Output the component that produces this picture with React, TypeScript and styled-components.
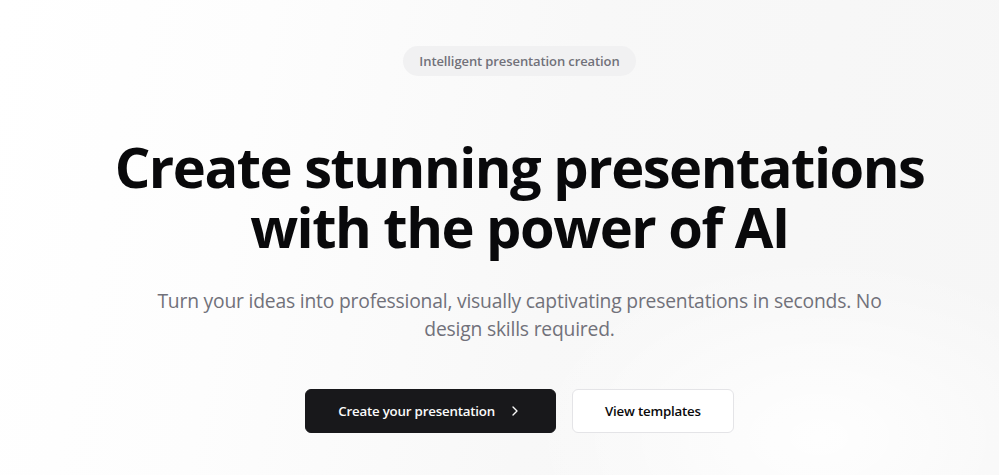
import React from "react";
import styled, { createGlobalStyle } from "styled-components";
import { ChevronRight } from "lucide-react";

const GlobalStyle = createGlobalStyle`
  html, body {
    margin: 0;
    padding: 0;
  }
  body {
    font-family: "Open Sans", "Noto Sans", Arial, sans-serif;
    background: #ffffff;
    -webkit-font-smoothing: antialiased;
  }
  * { box-sizing: border-box; }
`;

const Page = styled.main`
  min-height: 475px;
  width: 100%;
  overflow: hidden;
  background:
    radial-gradient(ellipse 420px 260px at 82% 92%, rgba(255,255,255,0.9), rgba(255,255,255,0) 70%),
    linear-gradient(100deg, #ffffff 0%, #fdfdfd 25%, #f8f8f8 55%, #f6f6f6 100%);
`;

const Hero = styled.section`
  display: flex;
  flex-direction: column;
  align-items: center;
  text-align: center;
  padding: 46px 0 40px 40px;
`;

const Badge = styled.div`
  display: inline-flex;
  align-items: center;
  height: 30px;
  padding: 0 16px;
  border-radius: 999px;
  background: #f1f1f2;
  color: #71717a;
  font-size: 13px;
  font-weight: 600;
  letter-spacing: -0.1px;
`;

const Title = styled.h1`
  margin: 60px 0 0;
  font-size: 56px;
  line-height: 60px;
  font-weight: 700;
  letter-spacing: -1.5px;
  color: #09090b;
`;

const Subtitle = styled.p`
  margin: 31px 0 0;
  max-width: 768px;
  font-size: 19.3px;
  line-height: 28px;
  font-weight: 400;
  color: #71717a;
  letter-spacing: -0.2px;
`;

const Actions = styled.div`
  display: flex;
  gap: 16px;
  margin-top: 46px;
`;

const Button = styled.button<{ $variant: "primary" | "outline" }>`
  display: inline-flex;
  align-items: center;
  justify-content: center;
  gap: 12px;
  height: 44px;
  padding: 0 32px;
  border-radius: 6px;
  font-family: inherit;
  font-size: 13.3px;
  font-weight: 600;
  letter-spacing: -0.2px;
  cursor: pointer;
  border: 1px solid ${(p) => (p.$variant === "primary" ? "#18181b" : "#e4e4e7")};
  background: ${(p) => (p.$variant === "primary" ? "#18181b" : "#ffffff")};
  color: ${(p) => (p.$variant === "primary" ? "#fafafa" : "#09090b")};
`;

export default function App() {
  return (
    <>
      <GlobalStyle />
      <Page>
        <Hero>
          <Badge>Intelligent presentation creation</Badge>
          <Title>
            Create stunning presentations
            <br />
            with the power of AI
          </Title>
          <Subtitle>
            Turn your ideas into professional, visually captivating presentations in seconds. No design skills required.
          </Subtitle>
          <Actions>
            <Button $variant="primary">
              Create your presentation
              <ChevronRight size={16} strokeWidth={2} />
            </Button>
            <Button $variant="outline">View templates</Button>
          </Actions>
        </Hero>
      </Page>
    </>
  );
}
